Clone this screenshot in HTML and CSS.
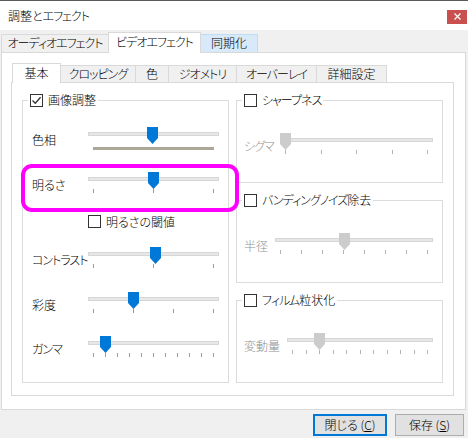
FILE: index.html
```html
<!DOCTYPE html>
<html lang="ja">
<head>
<meta charset="utf-8">
<title>調整とエフェクト</title>
<link rel="stylesheet" href="styles.css">
</head>
<body>
<div class="window">
  <header class="titlebar">
    <span class="title">調整と<span class="kana">エフェクト</span></span>
    <button class="close" aria-label="閉じる">
      <svg width="7" height="7" viewBox="0 0 7 7"><path d="M0.5 0.5L6.5 6.5M6.5 0.5L0.5 6.5" stroke="#fff" stroke-width="1.2"/></svg>
    </button>
  </header>

  <div class="outer">
    <div class="tabs outer-tabs">
      <div class="tab kana">オーディオエフェクト</div>
      <div class="tab active kana">ビデオエフェクト</div>
      <div class="tab hover">同期化</div>
    </div>

    <div class="outer-panel">
      <div class="tabs inner-tabs">
        <div class="tab active">基本</div>
        <div class="tab kana">クロッピング</div>
        <div class="tab">色</div>
        <div class="tab kana">ジオメトリ</div>
        <div class="tab kana">オーバーレイ</div>
        <div class="tab">詳細設定</div>
      </div>

      <div class="inner-panel">
        <fieldset class="group main">
          <legend><span class="legend-inner"><span class="cb checked"><svg width="11" height="11" viewBox="0 0 11 11"><path d="M1.5 5.5L4.3 8.3L9.6 2.2" fill="none" stroke="#333" stroke-width="1.3"/></svg></span>画像調整</span></legend>

          <div class="row">
            <span class="label">色相</span>
            <div class="slider">
              <div class="track"></div>
              <div class="hue"></div>
              <div class="thumb" style="left:59px"></div>
            </div>
          </div>

          <div class="row highlight mt19">
            <span class="label">明るさ</span>
            <div class="slider">
              <div class="track"></div>
              <div class="ticks"><i></i><i></i><i></i></div>
              <div class="thumb" style="left:60px"></div>
            </div>
          </div>

          <div class="cbrow mt19">
            <span class="cb"></span><span>明るさの閾値</span>
          </div>

          <div class="row mt17">
            <span class="label kana">コントラスト</span>
            <div class="slider">
              <div class="track"></div>
              <div class="ticks"><i></i><i></i><i></i></div>
              <div class="thumb" style="left:62px"></div>
            </div>
          </div>

          <div class="row mt19">
            <span class="label">彩度</span>
            <div class="slider">
              <div class="track"></div>
              <div class="ticks"><i></i><i></i><i></i><i></i></div>
              <div class="thumb" style="left:40px"></div>
            </div>
          </div>

          <div class="row mt18">
            <span class="label kana">ガンマ</span>
            <div class="slider">
              <div class="track"></div>
              <div class="ticks"><i></i><i></i><i></i><i></i><i></i><i></i><i></i><i></i><i></i><i></i><i></i></div>
              <div class="thumb" style="left:12px"></div>
            </div>
          </div>
        </fieldset>

        <div class="side-col">
          <fieldset class="group side">
            <legend><span class="legend-inner"><span class="cb"></span><span class="kana">シャープネス</span></span></legend>
            <div class="row">
              <span class="label dim kana w-sigma">シグマ</span>
              <div class="slider disabled">
                <div class="track"></div>
                <div class="ticks"><i></i><i></i><i></i><i></i><i></i></div>
                <div class="thumb" style="left:0px"></div>
              </div>
            </div>
          </fieldset>

          <fieldset class="group side">
            <legend><span class="legend-inner"><span class="cb"></span><span><span class="kana">バンディングノイズ</span>除去</span></span></legend>
            <div class="row">
              <span class="label dim w-radius">半径</span>
              <div class="slider disabled">
                <div class="track"></div>
                <div class="ticks"><i></i><i></i><i></i><i></i><i></i><i></i><i></i><i></i></div>
                <div class="thumb" style="left:64px"></div>
              </div>
            </div>
          </fieldset>

          <fieldset class="group side">
            <legend><span class="legend-inner"><span class="cb"></span><span><span class="kana">フィルム</span>粒状化</span></span></legend>
            <div class="row">
              <span class="label dim w-amount">変動量</span>
              <div class="slider disabled">
                <div class="track"></div>
                <div class="ticks"><i></i><i></i><i></i><i></i><i></i><i></i><i></i><i></i><i></i><i></i><i></i></div>
                <div class="thumb" style="left:27px"></div>
              </div>
            </div>
          </fieldset>
        </div>
      </div>
    </div>
  </div>

  <footer class="footer">
    <button class="btn default btn-close">閉じる (<u>C</u>)</button>
    <button class="btn btn-save">保存 (<u>S</u>)</button>
  </footer>
</div>
</body>
</html>
```

FILE: styles.css
```css
* { box-sizing: border-box; }

html, body { margin: 0; padding: 0; }

body {
  width: 468px;
  height: 438px;
  overflow: hidden;
  background: #f0f0f0;
  font-family: "Noto Sans CJK JP", "Noto Sans", sans-serif;
  font-size: 12px;
  font-weight: 300;
  font-feature-settings: "palt" 1;
  line-height: 14px;
  color: #000;
}

.kana { letter-spacing: -1px; }

/* title bar */
.titlebar {
  height: 30px;
  background: #fff;
  border-top: 1px solid #5a5a5a;
  display: flex;
  align-items: center;
  justify-content: space-between;
  padding: 0 1px 0 8px;
}
.title { line-height: 14px; }
.close {
  width: 20px;
  height: 14px;
  margin-top: 2px;
  padding: 0;
  border: 0;
  background: #c9504f;
  display: flex;
  align-items: center;
  justify-content: center;
}

/* tabs */
.outer { margin-left: 1px; width: 465px; }

.tabs { display: flex; align-items: flex-end; }

.tab {
  flex: none;
  border: 1px solid #d9d9d9;
  border-bottom: 0;
  background: #f0f0f0;
  text-align: center;
  white-space: nowrap;
  margin-left: -1px;
}
.tab:first-child { margin-left: 0; }
.tab.active {
  background: #fff;
  position: relative;
  z-index: 1;
  margin-bottom: -1px;
}
.tab.hover { background: #d8eaf9; border-color: #c0dcf3; }

.outer-tabs { height: 22px; }
.outer-tabs .tab { height: 18px; line-height: 16px; }
.outer-tabs .tab.active { height: 21px; padding-top: 1px; }
.outer-tabs .tab:nth-child(1) { width: 108px; }
.outer-tabs .tab:nth-child(2) { width: 93px; }
.outer-tabs .tab:nth-child(3) { width: 58px; }

.inner-tabs { height: 19px; padding-left: 1px; }
.inner-tabs .tab { height: 17px; line-height: 15px; }
.inner-tabs .tab.active { height: 20px; padding-top: 1px; line-height: 16px; }
.inner-tabs .tab:nth-child(1) { width: 49px; }
.inner-tabs .tab:nth-child(2) { width: 76px; }
.inner-tabs .tab:nth-child(3) { width: 34px; }
.inner-tabs .tab:nth-child(4) { width: 69px; }
.inner-tabs .tab:nth-child(5) { width: 81px; }
.inner-tabs .tab:nth-child(6) { width: 71px; }

/* panels */
.outer-panel {
  background: #fff;
  border: 1px solid #d9d9d9;
  padding: 10px 11px 13px 9px;
}

.inner-panel {
  background: #fff;
  border: 1px solid #d9d9d9;
  padding: 10px 10px 12px;
  display: grid;
  grid-template-columns: 207px 207px;
  column-gap: 7px;
  align-items: start;
}

.side-col {
  display: flex;
  flex-direction: column;
  gap: 10px;
}

/* group boxes */
.group {
  margin: 0;
  min-width: 0;
  border: 1px solid #dcdcdc;
}
.group legend {
  margin-left: 5px;
  padding: 0 2px;
  height: 14px;
  line-height: 14px;
}
.legend-inner {
  display: flex;
  align-items: center;
  gap: 5px;
  height: 14px;
  white-space: nowrap;
}
.main { padding: 18px 0 22px; }
.side { padding: 24px 0 25px; }

/* checkbox */
.cb {
  flex: none;
  width: 13px;
  height: 13px;
  border: 1px solid #333;
  background: #fff;
  display: flex;
  align-items: center;
  justify-content: center;
}

/* rows */
.row {
  display: flex;
  align-items: center;
  height: 26px;
  padding: 0 9px;
}
.label { flex: none; white-space: nowrap; }
.main .row .label { width: 56px; line-height: 26px; padding-top: 3px; }
.side .row { padding: 0 9px 0 7px; }
.side .row .label { padding-top: 3px; }
.dim { color: #8f8f8f; }
.w-sigma { width: 36px; }
.w-radius { width: 31px; }
.w-amount { width: 43px; }

.mt17 { margin-top: 17px; }
.mt18 { margin-top: 18px; }
.mt19 { margin-top: 19px; }

.cbrow {
  display: flex;
  align-items: center;
  gap: 5px;
  height: 13px;
  padding-left: 65px;
}

/* highlight annotation */
.highlight { position: relative; }
.highlight::after {
  content: "";
  position: absolute;
  left: -2px;
  top: -6px;
  width: 210px;
  height: 40px;
  border: 4px solid #ff00ff;
  border-radius: 11px;
}

/* slider */
.slider {
  flex: 1;
  position: relative;
  height: 26px;
}
.track {
  margin-top: 7px;
  height: 4px;
  background: #e7e7e7;
  border: 1px solid #d6d6d6;
}
.hue {
  margin: 11px 5px 0;
  height: 3px;
  background: #aca796;
}
.ticks {
  display: flex;
  justify-content: space-between;
  margin: 8px 5px 0;
  height: 4px;
}
.ticks i {
  width: 1px;
  height: 4px;
  background: #9c9c9c;
}
.thumb {
  position: absolute;
  top: 2px;
  width: 11px;
  height: 17px;
  background: #0078d7;
  clip-path: polygon(0 0, 100% 0, 100% 11px, 50% 100%, 0 11px);
}
.disabled .thumb { background: #cccccc; }
.disabled .ticks i { background: #b4b4b4; }

/* footer */
.footer {
  display: flex;
  justify-content: flex-end;
  gap: 8px;
  padding: 4px 4px 0 0;
}
.btn {
  height: 22px;
  padding: 0;
  background: #e1e1e1;
  border: 1px solid #adadad;
  font: inherit;
  font-feature-settings: "palt" 1;
  line-height: 20px;
  color: #000;
}
.btn.default { border: 2px solid #0078d7; line-height: 18px; }
.btn-close { width: 74px; }
.btn-save { width: 69px; }
```
